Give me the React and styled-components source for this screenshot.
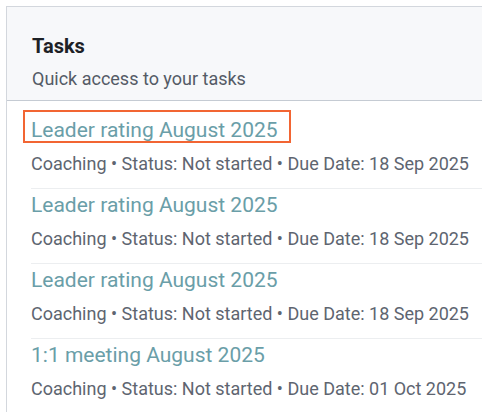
import React from 'react';
import styled, { createGlobalStyle } from 'styled-components';

const GlobalStyle = createGlobalStyle`
  html, body {
    margin: 0;
    padding: 0;
    background: #fff;
    overflow: hidden;
  }
  body {
    font-family: Roboto, "Noto Sans", Arial, sans-serif;
  }
`;

const tasks = [
  { title: 'Leader rating August 2025', type: 'Coaching', status: 'Not started', due: '18 Sep 2025', focused: true },
  { title: 'Leader rating August 2025', type: 'Coaching', status: 'Not started', due: '18 Sep 2025' },
  { title: 'Leader rating August 2025', type: 'Coaching', status: 'Not started', due: '18 Sep 2025' },
  { title: '1:1 meeting August 2025', type: 'Coaching', status: 'Not started', due: '01 Oct 2025' },
];

const Page = styled.div`
  padding: 6px 0 0 6px;
  overflow: hidden;
`;

const Card = styled.section`
  width: 620px;
  border-top: 1px solid #d3d7dd;
  border-left: 1px solid #d3d7dd;
  background: #fff;
`;

const Header = styled.header`
  background: #f7f8fa;
  padding: 27px 25px 9px;
  border-bottom: 1px solid #c5cbd3;
`;

const Title = styled.h2`
  margin: 0;
  font-size: 20px;
  line-height: 24px;
  font-weight: 700;
  color: #1d2126;
`;

const Subtitle = styled.p`
  margin: 9px 0 0;
  font-size: 18px;
  line-height: 24px;
  color: #545b66;
`;

const List = styled.ul`
  list-style: none;
  margin: 0;
  padding: 13px 0 0 24px;
`;

const Item = styled.li`
  padding: 4px 0 12px;
  border-top: ${(p) => (p.first ? 'none' : '1px solid #eceef0')};
`;

const TaskLink = styled.a`
  display: block;
  width: fit-content;
  font-size: 21px;
  line-height: 20px;
  color: #6a9ea8;
  text-decoration: none;
  outline: ${(p) => (p.focused ? '2px solid #f26533' : 'none')};
  outline-offset: 0;
  padding: 8px 11px 1px 6px;
  margin: -6px 0 -1px -6px;
`;

const Meta = styled.div`
  margin-top: 12px;
  font-size: 18px;
  line-height: 24px;
  color: #5e6570;
  white-space: nowrap;
`;

export default function App() {
  return (
    <Page>
      <GlobalStyle />
      <Card>
        <Header>
          <Title>Tasks</Title>
          <Subtitle>Quick access to your tasks</Subtitle>
        </Header>
        <List>
          {tasks.map((t, i) => (
            <Item key={i} first={i === 0}>
              <TaskLink href="#" focused={t.focused} onClick={(e) => e.preventDefault()}>
                {t.title}
              </TaskLink>
              <Meta>
                {t.type} • Status: {t.status} • Due Date: {t.due}
              </Meta>
            </Item>
          ))}
        </List>
      </Card>
    </Page>
  );
}
